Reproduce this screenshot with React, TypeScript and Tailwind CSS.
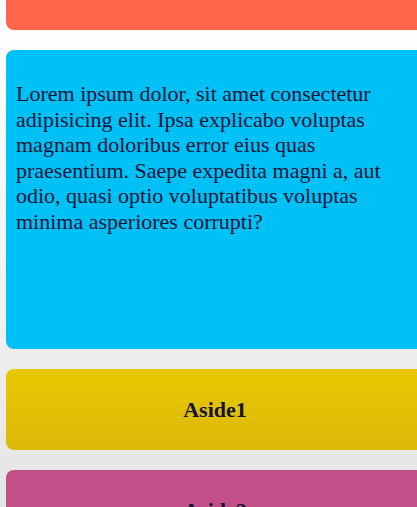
export default function App() {
  return (
    <div className="h-[507px] overflow-hidden bg-gradient-to-b from-white via-[#f4f4f4] to-[#e4e4e4] font-['Liberation_Serif',serif] text-[#14143a]">
      <div className="ml-[6px] w-[418px] flex flex-col gap-[20px]">
        {/* header (scrolled off) */}
        <div className="mt-[-30px] h-[60px] rounded-lg bg-[#ff664b]" />

        {/* main */}
        <div className="h-[299px] rounded-lg bg-[#00c1f6] px-[10px] pt-[31px]">
          <p className="text-[22px] leading-[25.6px]">
            Lorem ipsum dolor, sit amet consectetur adipisicing elit. Ipsa explicabo voluptas magnam
            doloribus error eius quas praesentium. Saepe expedita magni a, aut odio, quasi optio
            voluptatibus voluptas minima asperiores corrupti?
          </p>
        </div>

        <div className="h-[81px] rounded-lg bg-gradient-to-b from-[#e8c700] to-[#dcb908] flex items-center justify-center">
          <span className="text-[22px] font-bold">Aside1</span>
        </div>

        <div className="h-[81px] rounded-lg bg-[#c24f87] flex items-center justify-center">
          <span className="text-[22px] font-bold">Aside2</span>
        </div>
      </div>
    </div>
  );
}
